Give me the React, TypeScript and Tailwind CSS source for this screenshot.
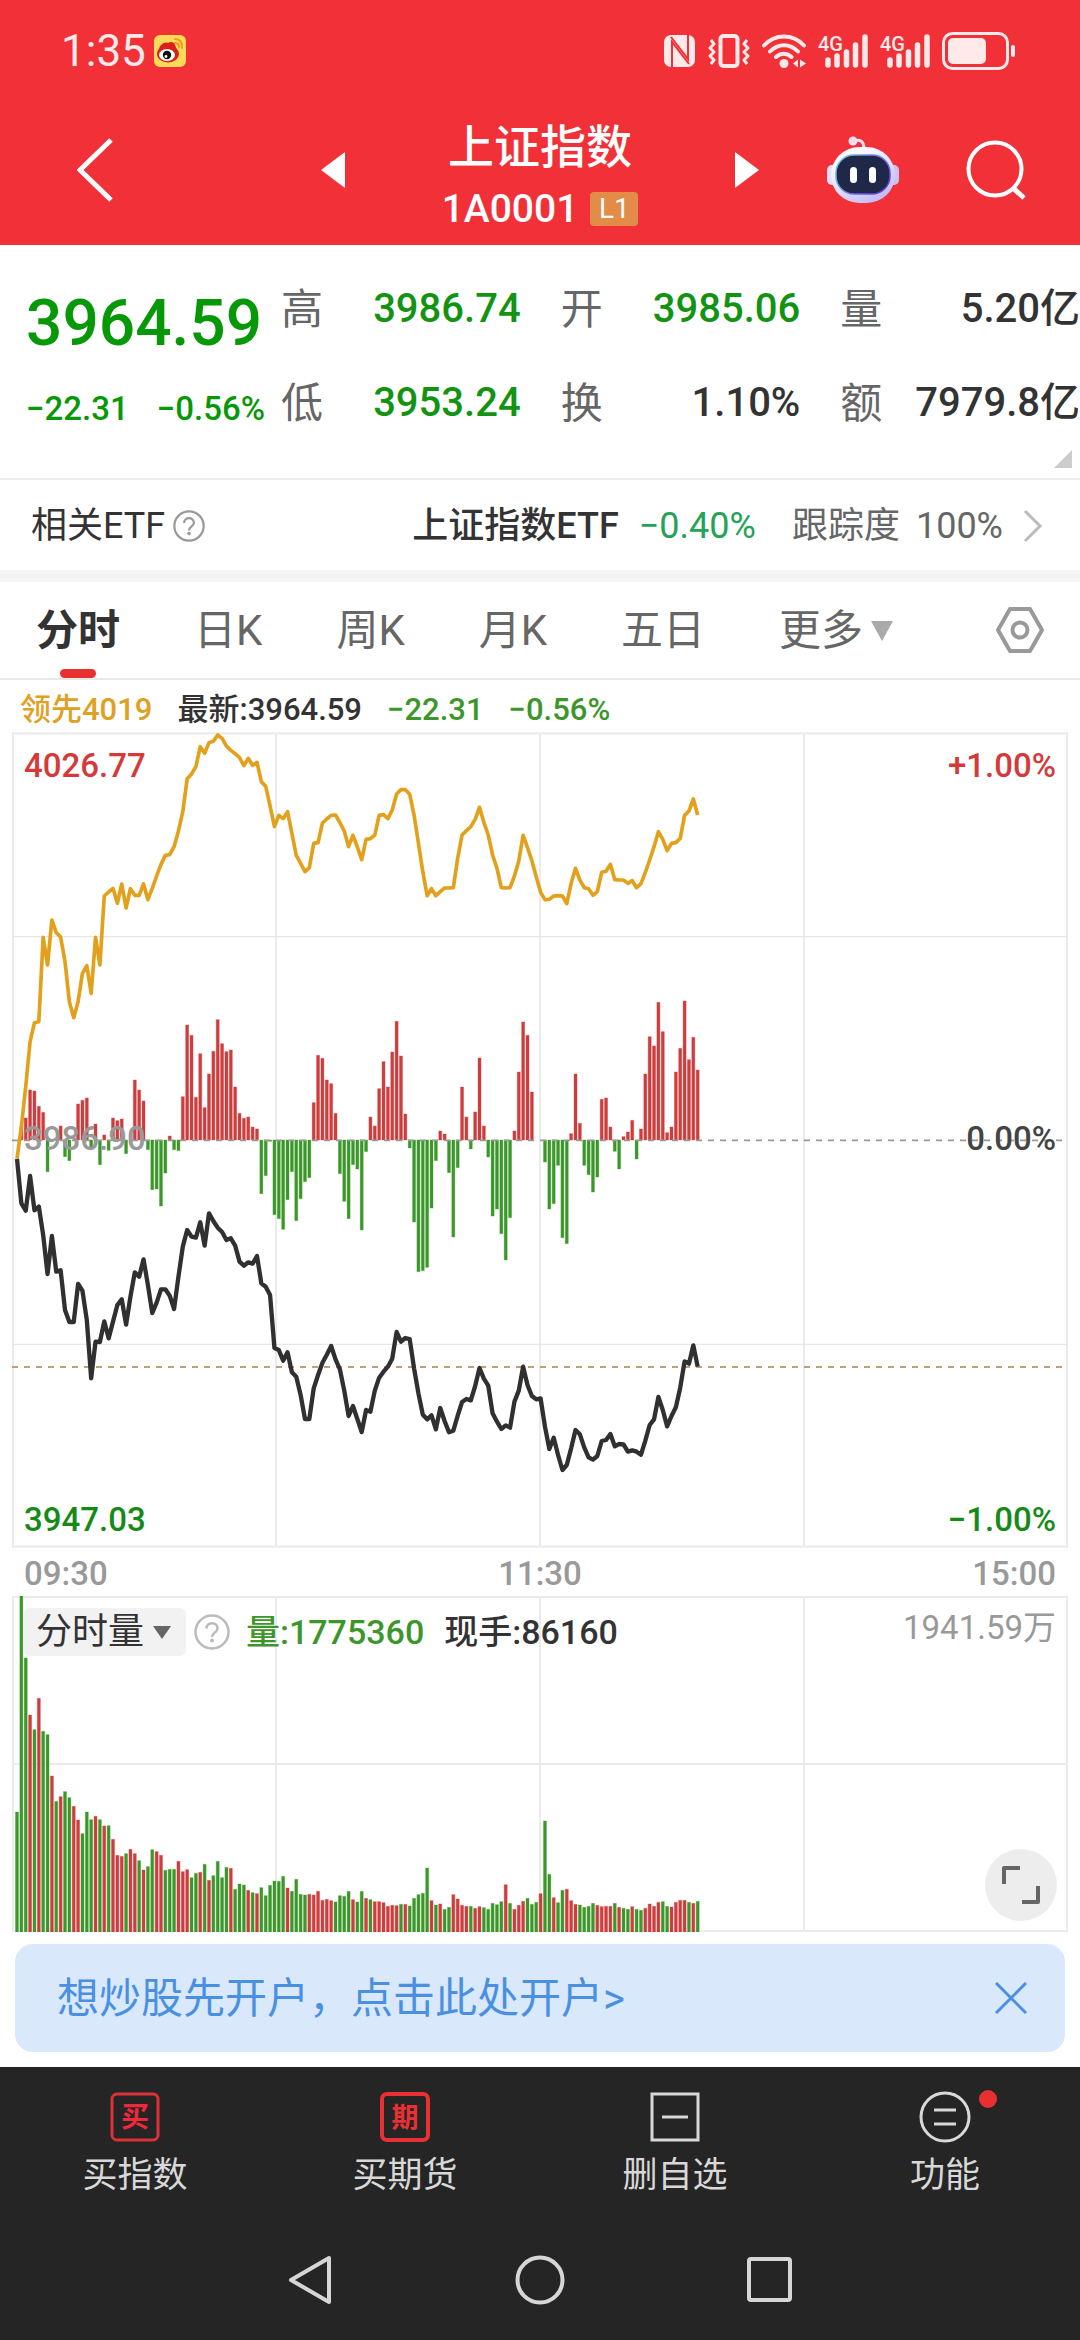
import { useState } from "react";

const STEP = 13.09; // one minute on the time axis
const START = 15;

// 领先指标
const lead = [
  1376, 1280, 1160, 1025, 968, 965, 712, 795, 660, 698, 711, 785, 905, 953, 905, 820, 797, 880, 712, 795,
  588, 576, 565, 610, 552, 624, 566, 586, 586, 552, 599, 565, 528, 493, 466, 464, 440, 393, 335, 236,
  222, 200, 140, 160, 128, 124, 105, 115, 138, 151, 161, 173, 197, 175, 196, 187, 245, 259, 318, 380,
  346, 356, 335, 400, 466, 490, 515, 503, 430, 428, 369, 357, 346, 345, 368, 393, 440, 406, 441, 479,
  418, 416, 405, 346, 344, 356, 330, 282, 269, 269, 283, 345, 430, 515, 587, 566, 587, 575, 564, 564,
  563, 475, 405, 392, 380, 358, 322, 367, 405, 465, 505, 563, 564, 563, 528, 483, 406, 443, 482, 530,
  577, 599, 598, 588, 587, 588, 611, 550, 505, 540, 563, 566, 586, 575, 517, 514, 493, 539, 540, 540,
  550, 542, 563, 551, 517, 480, 440, 395, 418, 452, 430, 428, 415, 346, 333, 297, 345,
];

// 最新价
const price = [
  117, 250, 272, 168, 271, 260, 345, 462, 348, 455, 451, 570, 606, 606, 492, 512, 600, 775, 665, 666,
  604, 655, 605, 555, 538, 614, 530, 457, 470, 418, 495, 579, 548, 508, 508, 527, 567, 470, 380, 330,
  350, 353, 307, 377, 280, 303, 323, 336, 360, 355, 377, 425, 437, 427, 431, 408, 490, 500, 525, 684,
  690, 722, 697, 757, 770, 825, 897, 897, 805, 765, 728, 704, 678, 718, 748, 812, 888, 858, 897, 936,
  870, 875, 812, 773, 755, 740, 716, 636, 665, 654, 657, 745, 820, 884, 898, 886, 928, 864, 903, 937,
  932, 887, 846, 837, 841, 798, 744, 776, 797, 880, 905, 927, 916, 923, 845, 812, 740, 795, 828, 838,
  835, 920, 987, 953, 1005, 1050, 1035, 985, 930, 943, 982, 1012, 1019, 1008, 963, 960, 942, 979, 972, 973,
  995, 991, 995, 1004, 962, 915, 898, 831, 870, 919, 888, 862, 803, 724, 731, 676, 740,
];

// 红绿柱, above zero is red
const force = [
  0, 40, 66, 150, 147, 101, 83, -95, 0, 0, 42, -50, -62, 0, 108, 119, 126, -25, 48, -74,
  15, -31, 66, 58, 63, -41, 0, 180, 150, 117, -29, -149, -147, -198, -99, 12, -29, -32, 130, 345,
  314, 128, 259, 97, 198, 266, 361, 289, 265, 270, 159, 80, 65, 69, 39, 33, -161, -107, -4, -224,
  -236, -268, -179, -95, -242, -176, -125, -113, 112, 254, 245, 180, 169, 80, -101, -184, -236, -74, -87, -270,
  -35, 69, 42, 154, 235, 159, 264, 356, 252, 78, -24, -246, -395, -392, -382, -204, -62, 27, 18, -98,
  -291, -83, 159, 69, -27, 84, 246, 42, -51, -228, -207, -281, -360, -233, 27, 204, 354, 314, 144, 0,
  0, -66, -207, -191, -76, -293, -311, 19, 198, 50, -76, -104, -156, -111, 122, 126, 39, -34, -87, 10,
  24, 59, -57, 33, 198, 310, 282, 413, 325, 22, 39, 204, 275, 417, 241, 308, 210,
];

// 分时量, negative means the minute closed down
const volume = [
  -360, -1008, -822, 651, -607, 701, -602, -592, 468, -392, 406, -421, -403, 377, 336, -295, -360, -337, 347, -337,
  318, -319, 278, 230, 227, -235, 248, 235, -214, 186, -196, -247, 241, 230, -185, -188, -188, 212, 181, 187,
  -163, -176, 179, -203, 155, -169, -212, -163, -194, 191, -128, -144, -141, 125, -118, 115, -133, -109, -140, -153,
  -152, -167, 132, -122, -158, -113, -111, 113, 111, 122, 95, 98, 94, -90, -109, -107, -122, 97, -90, -122,
  101, -97, 91, 91, 88, 77, 80, 79, -83, 83, -78, -101, -112, -116, -192, 94, -81, 84, -68, -74,
  112, 99, 80, 77, -77, 71, 76, -73, -68, -86, -82, -91, 142, -86, 68, 80, 92, -101, -83, -89,
  115, -333, -173, 103, -88, -125, 128, 94, 83, -81, -74, -77, -86, 80, 76, 77, 77, -86, 74, -71,
  -68, 76, -68, -65, 71, 84, 77, 89, -91, -77, 75, 89, 95, 95, -89, 86, -92,
];

const toPoints = (values: number[]) =>
  values.map((v, i) => `${(START + i * STEP).toFixed(1)},${v}`).join(" ");

type BarProps = { x: number; y: number; height: number; up: boolean };

const Bar = ({ x, y, height, up }: BarProps) => (
  <rect
    x={x - 4.5}
    y={y}
    width={9}
    height={height}
    fill={up ? "#c93f3f" : "#3f9430"}
    stroke={up ? "#fbb4b4" : "#b4e8a8"}
    strokeWidth={3}
    paintOrder="stroke"
  />
);

const StatusBar = () => (
  <div className="flex h-[82px] items-center justify-between pt-5 pr-[64px] pl-[61px] text-[#ffe9e9]">
    <div className="flex items-center gap-2">
      <span className="text-[44px] leading-[48px]">1:35</span>
      <svg width="32" height="32" viewBox="0 0 32 32">
        <rect width="32" height="32" rx="6" fill="#fdd95a" />
        <ellipse cx="14" cy="19" rx="11" ry="8.5" fill="#d9201c" />
        <path d="M5 17C4 11 10 6 14 8c2-2 7-1 7 2l2 5z" fill="#d9201c" />
        <ellipse cx="13" cy="20" rx="8" ry="6" fill="#fff" />
        <circle cx="13" cy="20" r="4.2" fill="#111" />
        <circle cx="12" cy="21.5" r="1.4" fill="#fff" />
        <path d="M21 4c5 0 8 4 7 9M21 8c3 0 4 2 4 4" fill="none" stroke="#f29b1d" strokeWidth="2" strokeLinecap="round" />
      </svg>
    </div>
    <div className="flex items-center gap-3">
      <svg width="32" height="34" viewBox="0 0 32 34">
        <rect x="0" y="1" width="31" height="32" rx="7" fill="currentColor" />
        <path d="M8 34V8l17 22M24 0v25L7 3" stroke="#f13038" strokeWidth="2" fill="none" />
      </svg>
      <svg width="42" height="34" viewBox="0 0 42 34" fill="none" stroke="currentColor" strokeLinejoin="round">
        <rect x="12.500" y="2" width="17" height="30" rx="3" strokeWidth="4" />
        <path d="M3 6l3 4-4 4 4 4-4 4 4 4-3 4M39 6l-3 4 4 4-4 4 4 4-4 4 3 4" strokeWidth="3" />
      </svg>
      <svg width="44" height="34" viewBox="0 0 44 34" fill="none" stroke="currentColor" strokeWidth="4" strokeLinecap="round">
        <path d="M2 11.500C13-.5 31-.5 42 11.500M8 17.500c8-8.500 20-8.500 28 0M14 23c4.500-4.500 11-4.500 15.500 0" />
        <circle cx="22" cy="29.500" r="4.500" fill="currentColor" stroke="none" />
        <path d="M31 29.500l5-4v8zM44 29.500l-6-4v8z" fill="currentColor" stroke="none" />
      </svg>
      <Signal />
      <Signal />
      <svg width="74" height="38" viewBox="0 0 74 38" fill="none" stroke="currentColor">
        <rect x="1.500" y="1.500" width="64" height="35" rx="9" strokeWidth="3" />
        <rect x="6" y="6" width="38" height="26" rx="5" fill="currentColor" stroke="none" />
        <path d="M71 15v8" strokeWidth="4" strokeLinecap="round" />
      </svg>
    </div>
  </div>
);

const Signal = () => (
  <svg className="overflow-visible" width="50" height="42" viewBox="0 -4 50 42">
    <text x="0" y="17" fontSize="20" fontWeight="500" fill="currentColor">
      4G
    </text>
    <path d="M10 26v5M19 22v9M28.500 18v13M37.500 11v20M47 3v28" stroke="currentColor" strokeWidth="5.500" strokeLinecap="round" />
  </svg>
);

const Header = () => (
  <header className="grid h-[163px] grid-cols-[1fr_390px_1fr] items-center text-white">
    <div className="flex items-center justify-between pt-3 pl-[77px]">
      <button aria-label="返回">
        <svg width="36" height="66" viewBox="0 0 36 66" fill="none" stroke="currentColor" strokeWidth="5">
          <path d="M34 3L3 33l31 30" />
        </svg>
      </button>
      <button aria-label="上一个">
        <svg width="24" height="36" viewBox="0 0 24 36" fill="currentColor">
          <path d="M24 0v36L0 18z" />
        </svg>
      </button>
    </div>
    <div className="flex flex-col items-center pt-[26px]">
      <h1 className="text-[46px] leading-[64px] font-medium">上证指数</h1>
      <div className="flex items-center gap-3">
        <span className="text-[39px] leading-[60px] font-medium">1A0001</span>
        <span className="w-[48px] rounded-sm bg-[#e28c48] text-center text-[28px] leading-[34px]">L1</span>
      </div>
    </div>
    <div className="flex items-center justify-between pt-3 pr-[54px]">
      <button aria-label="下一个">
        <svg width="24" height="36" viewBox="0 0 24 36" fill="currentColor">
          <path d="M0 0v36l24-18z" />
        </svg>
      </button>
      <button aria-label="智能助手">
        <svg width="72" height="68" viewBox="0 0 72 68">
          <defs>
            <linearGradient id="shell" x1="0" y1="0" x2="0.600" y2="1">
              <stop offset="0.300" stopColor="#fbf8ff" />
              <stop offset="1" stopColor="#c3bff5" />
            </linearGradient>
            <linearGradient id="rim" x1="0" y1="0" x2="1" y2="0.600">
              <stop offset="0" stopColor="#6fd0e8" />
              <stop offset="1" stopColor="#6b3fe0" />
            </linearGradient>
          </defs>
          <path d="M27 5q10-3 10 8" fill="none" stroke="#f6dcec" strokeWidth="3" />
          <circle cx="26" cy="5" r="4.500" fill="#f6dcec" />
          <rect x="0" y="29" width="12" height="20" rx="5" fill="#e4dffb" />
          <rect x="60" y="29" width="12" height="20" rx="5" fill="#c9c2f6" />
          <rect x="4" y="11" width="64" height="56" rx="28" fill="url(#shell)" />
          <rect x="9" y="19" width="54" height="39" rx="18" fill="#1f2848" stroke="url(#rim)" strokeWidth="1.500" />
          <rect x="23" y="31" width="7" height="16" rx="3.500" fill="#fff" />
          <rect x="42" y="31" width="7" height="16" rx="3.500" fill="#fff" />
        </svg>
      </button>
      <button aria-label="搜索">
        <svg width="60" height="60" viewBox="0 0 60 60" fill="none" stroke="currentColor" strokeWidth="4">
          <circle cx="29" cy="29" r="26.500" />
          <path d="M47 48l11 10" strokeWidth="5" />
        </svg>
      </button>
    </div>
  </header>
);

const stats = [
  { label: "高", value: "3986.74", color: "text-[#129412]" },
  { label: "开", value: "3985.06", color: "text-[#129412]" },
  { label: "量", value: "5.20亿", color: "text-[#333333]" },
  { label: "低", value: "3953.24", color: "text-[#129412]" },
  { label: "换", value: "1.10%", color: "text-[#333333]" },
  { label: "额", value: "7979.8亿", color: "text-[#333333]" },
];

const Quote = () => (
  <section className="border-b-2 border-[#eeeeee] pt-[17px] pb-1">
    <div className="flex">
      <div className="w-[281px] shrink-0 pl-[26px] text-[#079807]">
        <p className="text-[64px] leading-[124px] font-medium">3964.59</p>
        <p className="flex gap-7 text-[33px] leading-[46px] font-medium whitespace-nowrap">
          <span>−22.31</span>
          <span>−0.56%</span>
        </p>
      </div>
      <dl className="grid flex-1 grid-cols-3 gap-x-10">
        {stats.map((s) => (
          <div key={s.label} className="flex h-[94px] items-center justify-between whitespace-nowrap">
            <dt className="text-[42px] text-[#666666]">{s.label}</dt>
            <dd className={`text-[40px] font-medium ${s.color}`}>{s.value}</dd>
          </div>
        ))}
      </dl>
    </div>
    <svg className="mr-2 mb-[6px] ml-auto block" width="18" height="18" viewBox="0 0 18 18">
      <path d="M18 0v18H0z" fill="#cccccc" />
    </svg>
  </section>
);

const EtfRow = () => (
  <a href="#etf" className="flex h-[90px] items-center pt-[2px] pr-[37px] pl-[31px] text-[36px] text-[#333333]">
    <span>相关ETF</span>
    <HelpIcon className="ml-2 size-8 text-[#999999]" />
    <span className="ml-auto font-medium">上证指数ETF</span>
    <span className="ml-5 text-[#22a355]">−0.40%</span>
    <span className="ml-9 text-[#666666]">跟踪度</span>
    <span className="ml-4 text-[#666666]">100%</span>
    <svg className="ml-5" width="20" height="34" viewBox="0 0 20 34" fill="none" stroke="#bbbbbb" strokeWidth="3">
      <path d="M2 2l15 15L2 32" />
    </svg>
  </a>
);

const HelpIcon = ({ className }: { className: string }) => (
  <svg className={className} viewBox="0 0 36 36" fill="none" stroke="currentColor" strokeWidth="2.500">
    <circle cx="18" cy="18" r="16.500" />
    <path d="M12.500 14.500c0-7 11-7 11 0 0 4-5.500 4-5.500 8.500" />
    <circle cx="18" cy="26.500" r="2" fill="currentColor" stroke="none" />
  </svg>
);

const tabs = ["分时", "日K", "周K", "月K", "五日"];

const Tabs = () => {
  const [active, setActive] = useState("分时");

  return (
    <nav className="flex h-[98px] items-stretch border-b-2 border-[#e8e8e8] pr-9 pl-9 text-[42px] text-[#666666]">
      <div className="flex gap-[74px]">
        {tabs.map((tab) => (
          <button
            key={tab}
            onClick={() => setActive(tab)}
            className={`flex flex-col items-center justify-between whitespace-nowrap ${
              active === tab ? "font-bold text-[#333333]" : ""
            }`}
          >
            <span className="leading-[98px]">{tab}</span>
            {active === tab && <span className="-mt-4 h-[9px] w-9 shrink-0 rounded-full bg-[#e93030]" />}
          </button>
        ))}
        <button aria-haspopup="menu" className="flex items-center gap-2 self-start leading-[98px] whitespace-nowrap">
          更多
          <svg width="22" height="20" viewBox="0 0 22 20">
            <path d="M0 0h22L11 20z" fill="#aaaaaa" />
          </svg>
        </button>
      </div>
      <button aria-label="设置" className="ml-auto">
        <svg width="48" height="46" viewBox="0 0 48 46" fill="none" stroke="#999999" strokeWidth="4" strokeLinejoin="round">
          <path d="M14 2h20l12 21-12 21H14L2 23z" />
          <circle cx="24" cy="23" r="7.500" />
        </svg>
      </button>
    </nav>
  );
};

const PriceChart = () => (
  <div className="relative">
    <svg className="block h-auto w-full" viewBox="0 0 3168 2448">
      <g fill="none" stroke="#ebebeb" strokeWidth="6">
        <rect x="3" y="4" width="3162" height="2440" />
        <path d="M792 4V2444M1584 4V2444M2376 4V2444" />
        <path d="M3 614H3165M3 1837H3165" stroke="#e2e2e2" strokeWidth="3" />
      </g>
      {force.map((v, i) =>
        v === 0 ? null : (
          <Bar key={i} x={START + i * STEP} y={v > 0 ? 1224 - v : 1224} height={Math.abs(v)} up={v > 0} />
        ),
      )}
      <path d="M0 1225H3168" stroke="#999999" strokeWidth="5" strokeDasharray="18 18" />
      <path d="M0 1905H3168" stroke="#bfa274" strokeWidth="6" strokeDasharray="18 18" />
      <g fill="none" strokeLinejoin="round">
        <polyline transform="translate(0 -96)" points={toPoints(lead)} stroke="#e2a01b" strokeWidth="11" />
        <polyline transform="translate(0 1164)" points={toPoints(price)} stroke="#303030" strokeWidth="13" />
      </g>
    </svg>
    <div className="absolute inset-0 flex flex-col justify-between px-3 pt-[14px] pb-2 text-[33px] leading-[40px] font-medium">
      <p className="flex justify-between text-[#d43a3a]">
        <span>4026.77</span>
        <span>+1.00%</span>
      </p>
      <p className="flex justify-between pb-2">
        <span className="text-[#999999]">3986.90</span>
        <span className="text-[#444444]">0.00%</span>
      </p>
      <p className="flex justify-between text-[#168a16]">
        <span>3947.03</span>
        <span>−1.00%</span>
      </p>
    </div>
  </div>
);

const VolumeChart = () => (
  <div className="relative">
    <svg className="block h-auto w-full" viewBox="0 0 3168 1008">
      <g fill="none" stroke="#ebebeb" strokeWidth="6">
        <rect x="3" y="3" width="3162" height="1002" />
        <path d="M792 3V1005M1584 3V1005M2376 3V1005M3 504H3165" />
      </g>
      {volume.map((v, i) => (
        <Bar key={i} x={START + i * STEP} y={1008 - Math.abs(v)} height={Math.abs(v)} up={v > 0} />
      ))}
    </svg>
    <div className="absolute inset-x-3 top-3 flex items-center text-[34px] leading-[48px] font-medium whitespace-nowrap">
      <div className="relative flex items-center">
        <select
          aria-label="副图指标"
          className="h-12 w-[162px] appearance-none rounded-md bg-[#f2f2f2] pl-3 text-[36px] font-normal text-[#333333]"
        >
          <option>分时量</option>
        </select>
        <svg className="pointer-events-none absolute right-[14px]" width="20" height="13" viewBox="0 0 20 13">
          <path d="M1 0h18l-9 13z" fill="#666666" />
        </svg>
      </div>
      <HelpIcon className="ml-2 size-9 text-[#bbbbbb]" />
      <span className="ml-4 text-[#3d962b]">量:1775360</span>
      <span className="ml-5 text-[#333333]">现手:86160</span>
      <span className="ml-auto self-start text-[33px] leading-[40px] font-normal text-[#999999]">1941.59万</span>
    </div>
    <button
      aria-label="全屏"
      className="absolute right-[11px] bottom-[11px] flex size-[72px] items-center justify-center rounded-full bg-[#ededed]"
    >
      <svg width="38" height="38" viewBox="0 0 38 38" fill="none" stroke="#666666" strokeWidth="4">
        <path d="M2 18V2h16M36 20v16H20" strokeLinejoin="round" />
      </svg>
    </button>
  </div>
);

const Banner = () => (
  <aside className="mx-[15px] mt-3 mb-[15px] flex h-[108px] items-center justify-between rounded-[18px] bg-[#d9e8fb] pr-[38px] pl-[42px] text-[42px] text-[#4a90e2]">
    <a href="#open">想炒股先开户，点击此处开户&gt;</a>
    <button aria-label="关闭">
      <svg width="32" height="32" viewBox="0 0 32 32" fill="none" stroke="currentColor" strokeWidth="3">
        <path d="M1 1l30 30M31 1L1 31" />
      </svg>
    </button>
  </aside>
);

const ToolBar = () => (
  <nav className="grid grid-cols-4 pt-6 text-[35px] text-[#d8d8d8]">
    <button className="flex flex-col items-center">
      <svg width="52" height="52" viewBox="0 0 52 52">
        <rect x="3" y="3" width="46" height="46" rx="5" fill="none" stroke="#dc3237" strokeWidth="3" />
        <text x="26" y="36" textAnchor="middle" fontSize="28" fontWeight="700" fill="#f0283c">
          买
        </text>
      </svg>
      <span className="leading-[66px]">买指数</span>
    </button>
    <button className="flex flex-col items-center">
      <svg width="52" height="52" viewBox="0 0 52 52">
        <rect x="3" y="3" width="46" height="46" rx="5" fill="none" stroke="#e93034" strokeWidth="4" />
        <text x="26" y="36" textAnchor="middle" fontSize="27" fontWeight="700" fill="#e93034">
          期
        </text>
      </svg>
      <span className="leading-[66px]">买期货</span>
    </button>
    <button className="flex flex-col items-center">
      <svg width="52" height="52" viewBox="0 0 52 52" fill="none" stroke="currentColor" strokeWidth="3">
        <rect x="3" y="3" width="46" height="46" />
        <path d="M13 26h26" />
      </svg>
      <span className="leading-[66px]">删自选</span>
    </button>
    <button className="flex flex-col items-center">
      <span className="relative">
        <svg width="52" height="52" viewBox="0 0 52 52" fill="none" stroke="currentColor" strokeWidth="3">
          <circle cx="26" cy="26" r="24" />
          <path d="M15 19h22M15 33h22" />
        </svg>
        <span className="absolute -top-px -right-[26px] size-[18px] rounded-full bg-[#e93030]" />
      </span>
      <span className="leading-[66px]">功能</span>
    </button>
  </nav>
);

const SystemNav = () => (
  <div className="flex items-center justify-center gap-[180px] pt-[46px] pb-6 text-[#d6d6d6]">
    <button aria-label="后退">
      <svg width="50" height="50" viewBox="0 0 50 50" fill="none" stroke="currentColor" strokeWidth="4" strokeLinejoin="round">
        <path d="M44 3v44L6 25z" />
      </svg>
    </button>
    <button aria-label="主页">
      <svg width="50" height="50" viewBox="0 0 50 50" fill="none" stroke="currentColor" strokeWidth="4">
        <circle cx="25" cy="25" r="22.500" />
      </svg>
    </button>
    <button aria-label="最近任务">
      <svg width="50" height="50" viewBox="0 0 50 50" fill="none" stroke="currentColor" strokeWidth="4">
        <rect x="4" y="4" width="41" height="41" rx="2" />
      </svg>
    </button>
  </div>
);

export default function App() {
  return (
    <div className="flex min-h-screen flex-col bg-white font-['Roboto','Noto_Sans_CJK_SC',sans-serif]">
      <div className="bg-[#f13038]">
        <StatusBar />
        <Header />
      </div>

      <Quote />
      <EtfRow />
      <div className="h-3 bg-[#f4f4f4]" />
      <Tabs />

      <main>
        <p className="flex gap-[25px] pt-2 pl-5 text-[31px] leading-[44px] font-medium whitespace-nowrap text-[#3d962b]">
          <span className="text-[#dfa023]">领先4019</span>
          <span className="text-[#333333]">最新:3964.59</span>
          <span>−22.31</span>
          <span>−0.56%</span>
        </p>
        <div className="px-3">
          <PriceChart />
          <div className="grid grid-cols-3 px-3 pt-1 text-[33px] leading-[44px] font-medium text-[#999999]">
            <span>09:30</span>
            <span className="text-center">11:30</span>
            <span className="text-right">15:00</span>
          </div>
          <VolumeChart />
        </div>
      </main>

      <Banner />

      <footer className="flex-1 bg-[#252525]">
        <ToolBar />
        <SystemNav />
      </footer>
    </div>
  );
}
